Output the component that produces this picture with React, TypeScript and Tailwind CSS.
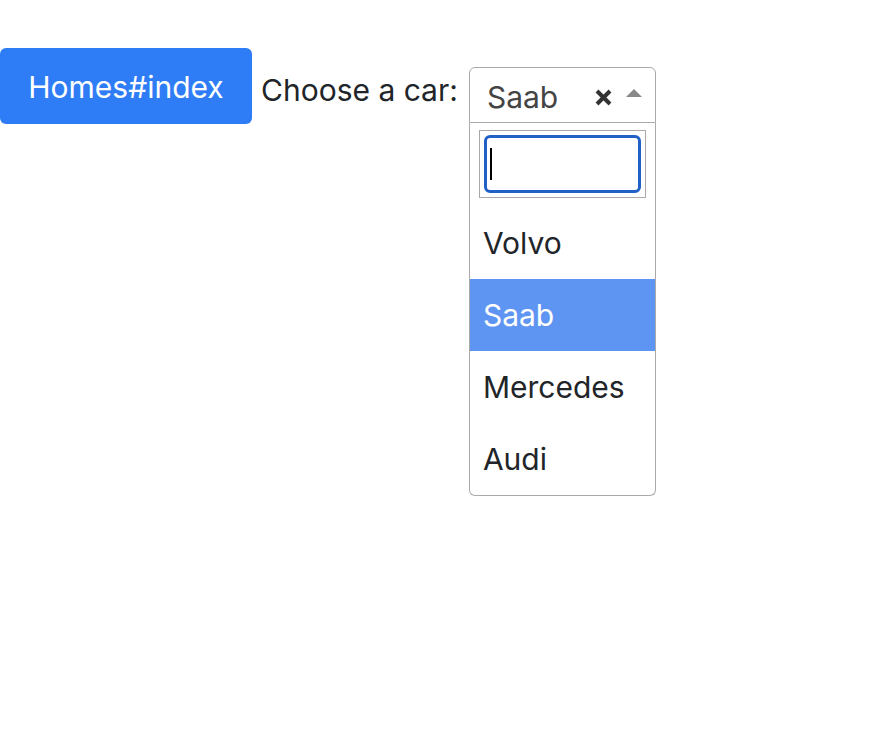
import React from "react";

export default function App() {
  const options = ["Volvo", "Saab", "Mercedes", "Audi"];
  return (
    <div
      className="w-[878px] h-[736px] bg-white text-[#212529]"
      style={{ fontFamily: "Inter, 'Liberation Sans', sans-serif" }}
    >
      <div className="flex items-start">
        <button className="mt-[48px] w-[252px] h-[76px] rounded-[6px] bg-[#2f7df6] text-white text-[30px] leading-[36px] flex items-center justify-center pt-[2px]">
          Homes#index
        </button>
        <div className="ml-[9px] mt-[72px] text-[30px] leading-[36px]">Choose a car:</div>
        <div className="ml-[11px] mt-[67px] w-[187px]">
          <div className="h-[56px] border border-[#aaaaaa] rounded-t-[6px] flex items-center pl-[17px] pr-[13px]">
            <span className="text-[#444444] text-[30px] leading-[36px] mt-[4px] flex-1">Saab</span>
            <svg width="17" height="17" viewBox="0 0 17 17" className="mt-[4px] mr-[14px]">
              <path d="M2 2 L15 15 M15 2 L2 15" stroke="#333333" strokeWidth="4" strokeLinecap="butt" />
            </svg>
            <svg width="16" height="10" viewBox="0 0 16 10" className="mt-[-4px]">
              <path d="M0 9 L8 1 L16 9 Z" fill="#888888" />
            </svg>
          </div>
          <div className="border border-t-0 border-[#aaaaaa] rounded-b-[6px] overflow-hidden">
            <div className="px-[9px] pt-[7px] pb-[9px]">
              <div className="border border-[#aaaaaa] p-[4px] h-[68px]">
                <div className="h-full rounded-[6px] border-[3px] border-[#2160c4] flex items-center pl-[3px]">
                  <div className="w-[2px] h-[32px] bg-black" />
                </div>
              </div>
            </div>
            {options.map((o) => (
              <div
                key={o}
                className={
                  "h-[72px] flex items-center pl-[13px] text-[30px] leading-[36px] " +
                  (o === "Saab" ? "bg-[#5f95f2] text-white" : "text-[#212529]")
                }
              >
                {o}
              </div>
            ))}
          </div>
        </div>
      </div>
    </div>
  );
}
